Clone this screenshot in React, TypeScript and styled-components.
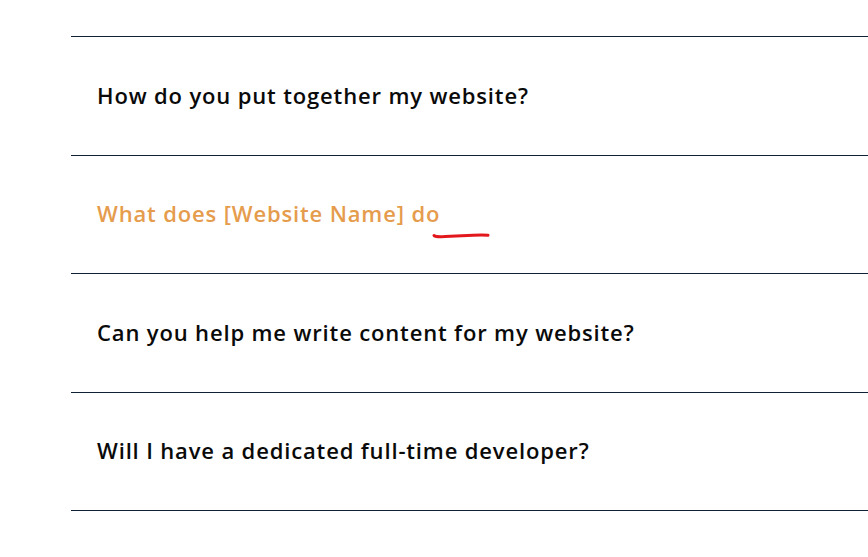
import * as React from 'react';
import styled, {createGlobalStyle} from 'styled-components';

const GlobalStyle = createGlobalStyle`
    html, body {
        margin: 0;
        padding: 0;
        background: #fff;
        overflow: hidden;
    }
`

const Page = styled.main`
    padding: 36px 0 0 71px;
    font-family: 'Open Sans', 'Liberation Sans', sans-serif;
`

const List = styled.ul`
    list-style: none;
    margin: 0;
    padding: 0;
    border-bottom: 1px solid #0f2132;
`

const Item = styled.li`
    height: 118.5px;
    box-sizing: border-box;
    border-top: 1px solid #0f2132;
    display: flex;
    align-items: center;
    padding: 0 0 2px 26px;
`

const Question = styled.span<{$active?: boolean}>`
    position: relative;
    font-size: 22px;
    font-weight: 600;
    letter-spacing: 0.85px;
    color: ${p => p.$active ? '#e59c4d' : '#0a0a0a'};
`

const Squiggle = styled.svg`
    position: absolute;
    right: -51px;
    bottom: -11px;
    width: 60px;
    height: 10px;
`

const questions = [
    'How do you put together my website?',
    'What does [Website Name] do',
    'Can you help me write content for my website?',
    'Will I have a dedicated full-time developer?',
]

export default function App() {
    return (
        <Page>
            <GlobalStyle/>
            <List>
                {questions.map((q, i) => (
                    <Item key={q}>
                        <Question $active={i === 1}>
                            {q}
                            {i === 1 &&
                                <Squiggle viewBox="0 0 60 10">
                                    <path d="M3 6.5 Q5 8.2 14 7.6 L42 6.2 Q53 5.6 57 6.3"
                                          fill="none" stroke="#e3181d" strokeWidth="3"
                                          strokeLinecap="round"/>
                                </Squiggle>}
                        </Question>
                    </Item>
                ))}
            </List>
        </Page>
    );
}
